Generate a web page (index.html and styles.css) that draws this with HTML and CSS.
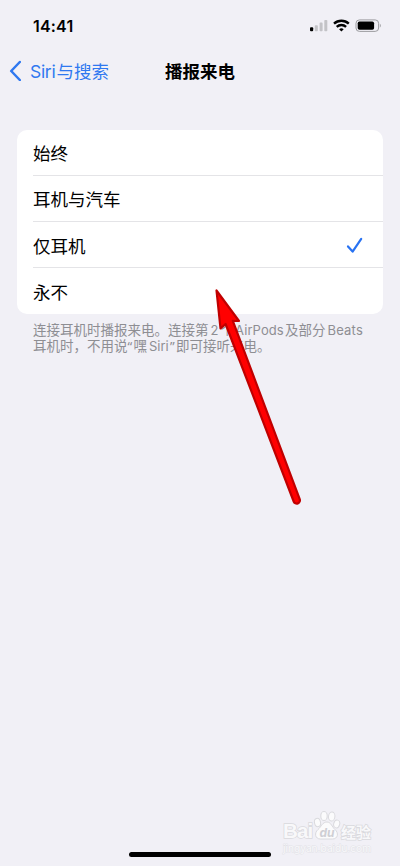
FILE: index.html
```html
<!DOCTYPE html>
<html lang="zh-CN">
<head>
    <meta charset="UTF-8">
    <meta name="viewport" content="width=device-width, initial-scale=1.0">
    <title>播报来电</title>
    <link rel="stylesheet" href="styles.css">
</head>
<body>
    <div class="page">
        <!-- 状态栏 -->
        <div class="status">
            <div class="time">14:41</div>
            <svg class="status-icons" width="74" height="16" viewBox="0 0 74 16">
                <!-- 信号 -->
                <rect x="2" y="9.3" width="3.2" height="4" rx="1" fill="#000"/>
                <rect x="6.8" y="7.2" width="3" height="6.1" rx=".8" fill="#c3c3c7"/>
                <rect x="11.6" y="4.6" width="3" height="8.7" rx=".8" fill="#c3c3c7"/>
                <rect x="16.3" y="2" width="3" height="11.3" rx=".8" fill="#c3c3c7"/>
                <!-- Wi-Fi -->
                <g fill="none" stroke="#000" stroke-width="2.3">
                    <path d="M26 5.7a10.7 10.7 0 0 1 14.8 0"/>
                    <path d="M28.7 8.9a6.8 6.8 0 0 1 9.4 0"/>
                </g>
                <path d="M33.4 13.6l-2.3-2.3a3.3 3.3 0 0 1 4.6 0z" fill="#000"/>
                <!-- 电池 -->
                <rect x="48" y="1.9" width="22.6" height="11.5" rx="3.4" fill="none" stroke="#9c9ca0"/>
                <rect x="49.7" y="3.5" width="16.4" height="8.3" rx="1.8" fill="#000"/>
                <path d="M71.9 5.8c1.2.4 1.2 3.2 0 3.6z" fill="#9c9ca0"/>
            </svg>
        </div>
        <!-- 导航栏 -->
        <div class="nav">
            <div class="back">
                <svg width="12" height="22" viewBox="0 0 12 22">
                    <path d="M10.8 3L2.2 12l8.6 9" fill="none" stroke="#2f78f0" stroke-width="2.5" stroke-linecap="round" stroke-linejoin="round"/>
                </svg>
                <span class="back-text"><span class="latin">Siri</span>与搜索</span>
            </div>
            <div class="title">播报来电</div>
        </div>
        <!-- 选项 -->
        <div class="list">
            <div class="item">始终</div>
            <div class="item">耳机与汽车</div>
            <div class="item low">仅耳机
                <svg width="17" height="17" viewBox="0 0 17 17">
                    <path d="M2 9.4l4.6 5.2 8.6-12.7" fill="none" stroke="#2872f2" stroke-width="2.2" stroke-linecap="round" stroke-linejoin="round"/>
                </svg>
            </div>
            <div class="item low">永不</div>
        </div>
        <div class="note">
            <div>连接耳机时播报来电。连接第<span class="latin num">2</span>个<span class="latin pods">AirPods</span>及部分<span class="latin beats">Beats</span></div>
            <div>耳机时，不用说<span class="latin quote">“</span>嘿<span class="latin siri">Siri</span><span class="latin quote">”</span>即可接听来电。</div>
        </div>
        <div class="home-bar"></div>
        <!-- 箭头 -->
        <svg class="arrow" width="104" height="230" viewBox="0 0 104 230">
            <path d="M16.5 10.5L20.5 48.5 25.6 44 93.7 221.5A3.2 3.2 0 0 0 99.7 219.2L32.8 40.8 39 41z" fill="#f00" stroke="#c00000" stroke-width="2.2" stroke-linejoin="round"/>
        </svg>
        <!-- 水印 -->
        <div class="watermark">
            <div class="brand">
                <span class="bai">Bai</span>
                <svg width="28" height="30" viewBox="0 0 28 30">
                    <g fill="#fbfbfc" stroke="#dadade" stroke-width="1">
                        <ellipse cx="4.5" cy="12.5" rx="3" ry="4.2" transform="rotate(-12 4.5 12.5)"/>
                        <ellipse cx="11" cy="6" rx="3.2" ry="4.5"/>
                        <ellipse cx="18.7" cy="6.5" rx="3.2" ry="4.5" transform="rotate(8 18.7 6.5)"/>
                        <ellipse cx="23.7" cy="14" rx="3" ry="4" transform="rotate(14 23.7 14)"/>
                        <path d="M14 12c4 0 5 5 8 7.5 4 3.5 3 9.5-2.5 9.5h-12C2 29 1 23 5 19.5 8.500 16.500 9.500 12 14 12z"/>
                    </g>
                    <text x="14" y="26.5" text-anchor="middle" class="du">du</text>
                </svg>
                <span class="jingyan">经验</span>
            </div>
            <div class="site">jingyan.baidu.com</div>
        </div>
    </div>
</body>
</html>
```
FILE: styles.css
```css
body {
    margin: 0;
    background-color: #F1F0F6;
    color: #000;
    font-family: Inter, "Noto Sans CJK SC", sans-serif;
    overflow: hidden;
}

svg {
    display: block;
    flex-shrink: 0;
}

.page {
    position: relative;
    box-sizing: border-box;
    display: flex;
    flex-direction: column;
    height: 866px;
    padding: 16px 17px 9px;
}

/* 状态栏 */

.status {
    display: flex;
    justify-content: space-between;
    height: 20px;
    padding-left: 16px;
}
.time {
    font-size: 16px;
    font-weight: 600;
    line-height: 20px;
    letter-spacing: 0.2px;
}
.status-icons {
    margin: 2px 1px 0 0;
}

/* 导航栏 */

.nav {
    display: grid;
    grid-template-columns: 1fr auto 1fr;
    align-items: center;
    height: 44px;
    margin: 12px -8px 37.5px;
    font-size: 17.5px;
}
.back {
    display: flex;
    align-items: center;
    gap: 9px;
    color: #2F78F0;
    white-space: nowrap;
}
.back-text .latin {
    display: inline-block;
    width: 26.5px;
    letter-spacing: -0.3px;
}
.title {
    font-weight: 600;
}

/* 选项 */

.list {
    border-radius: 10px;
    background-color: #FFF;
}
.item {
    display: flex;
    align-items: center;
    justify-content: space-between;
    box-sizing: border-box;
    height: 46px;
    margin-left: 16px;
    padding-right: 20px;
    font-size: 17.5px;
}
.item:first-child {
    height: 45.5px;
}
.item:last-child {
    height: 46.5px;
}
.item + .item {
    border-top: 1px solid #E4E4E7;
}
.item.low {
    padding-top: 1px;
}

/* 说明 */

.note {
    padding: 8px 0 0 16px;
    color: #8E8E93;
    font-size: 13.5px;
    line-height: 16.5px;
    white-space: nowrap;
}
.note .latin {
    display: inline-block;
    box-sizing: border-box;
    font-size: 13px;
}
.note .num {
    width: 12px;
    padding-left: 2px;
}
.note .pods {
    width: 51px;
    padding-left: 1px;
    letter-spacing: 0.1px;
}
.note .beats {
    padding-left: 2px;
    letter-spacing: 0.2px;
}
.note .quote {
    width: 6px;
    font-family: "Noto Sans", sans-serif;
    line-height: 16px;
}
.note .siri {
    width: 23px;
    padding-left: 2px;
}

.home-bar {
    width: 142px;
    height: 5px;
    margin: auto auto 0;
    border-radius: 3px;
    background-color: #000;
}

/* 箭头 */

.arrow {
    position: absolute;
    top: 280px;
    left: 200px;
}

/* 水印 */

.watermark {
    position: absolute;
    top: 811px;
    left: 283px;
    color: #F8F8FA;
}
.brand {
    display: flex;
    align-items: flex-end;
    height: 30px;
}
.bai,
.jingyan {
    font-weight: 700;
    -webkit-text-stroke: 1.5px #D9D9DD;
    paint-order: stroke fill;
}
.bai {
    width: 30px;
    font-family: "Liberation Sans", sans-serif;
    font-size: 20.5px;
    line-height: 20px;
    letter-spacing: -0.8px;
}
.brand svg {
    margin-bottom: 1px;
}
.du {
    fill: #CFCFD4;
    font-size: 12px;
    font-weight: 700;
    font-style: italic;
}
.jingyan {
    font-size: 15px;
    line-height: 16px;
}
.site {
    font-size: 10.2px;
    line-height: 14px;
    -webkit-text-stroke: 1px #E2E2E7;
    paint-order: stroke fill;
}
```
